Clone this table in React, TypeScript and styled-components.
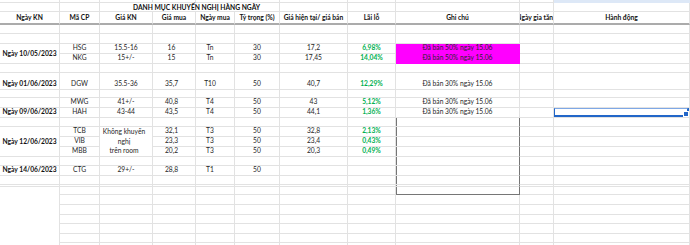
import React from 'react';
import styled, { createGlobalStyle } from 'styled-components';

const GlobalStyle = createGlobalStyle`
  html, body { margin: 0; padding: 0; background: #ffffff; }
  body { font-family: Lato, "Liberation Sans", sans-serif; }
`;

const COLS = [60, 40, 53, 43, 39, 45, 68, 48, 124, 34, 136];
const ROWS = [3, 9, 13, 9, 10, 10, 10, 9, 17, 8, 10, 10, 9, 10, 10, 10, 9, 10, 9, 2, 8, 10, 10, 9, 10, 9, 12];

const GRID = '#e2e2e2';
const BOX = '#767676';
const MAGENTA = '#ff00ff';
const GREEN = '#00b050';

type CellDef = {
  text?: string;
  bold?: boolean;
  green?: boolean;
  fill?: string;
  pr?: number;
  pl?: number;
  justify?: 'flex-start' | 'center';
  valign?: 'flex-end' | 'center';
  rs?: number;
  cs?: number;
  selected?: boolean;
  spill?: boolean;
};

const cells: Record<string, CellDef> = {};
const set = (r: number, c: number, d: CellDef) => {
  cells[`${r},${c}`] = { ...(cells[`${r},${c}`] || {}), ...d };
};

// title
set(1, 2, {
  text: 'DANH MỤC KHUYẾN NGHỊ HÀNG NGÀY',
  bold: true,
  cs: 4,
  justify: 'flex-start',
  pl: 33,
  spill: true,
});
// header
[
  'Ngày KN',
  'Mã CP',
  'Giá KN',
  'Giá mua',
  'Ngày mua',
  'Tỷ trọng (%)',
  'Giá hiện tại/ giá bán',
  'Lãi lỗ',
  'Ghi chú',
  'Ngày gia tăng',
  'Hành động',
].forEach((t, c) => set(2, c, { text: t, bold: true }));

const PR = [0, 0, 0, 5, 10, 0, 0, 0, 0, 0, 0];

const dataRow = (r: number, vals: (string | null)[]) => {
  vals.forEach((v, i) => {
    const c = i + 1;
    if (v === null) return;
    const d: CellDef = { text: v, pr: PR[c] };
    if (c === 7) {
      d.green = true;
      d.bold = true;
    }
    set(r, c, d);
  });
};

set(5, 0, { text: 'Ngày 10/05/2023', bold: true, rs: 2, valign: 'center' });
dataRow(5, ['HSG', '15.5-16', '16', 'Tn', '30', '17,2', '6,98%']);
set(5, 8, { text: 'Đã bán 50% ngày 15.06', fill: MAGENTA });
dataRow(6, ['NKG', '15+/-', '15', 'Tn', '30', '17,45', '14,04%']);
set(6, 8, { text: 'Đã bán 50% ngày 15.06', fill: MAGENTA });

set(8, 0, { text: 'Ngày 01/06/2023', bold: true });
dataRow(8, ['DGW', '35.5-36', '35,7', 'T10', '50', '40,7', '12,29%']);
set(8, 8, { text: 'Đã bán 30% ngày 15.06' });

dataRow(10, ['MWG', '41+/-', '40,8', 'T4', '50', '43', '5,12%']);
set(10, 8, { text: 'Đã bán 30% ngày 15.06' });
set(11, 0, { text: 'Ngày 09/06/2023', bold: true });
dataRow(11, ['HAH', '43-44', '43,5', 'T4', '50', '44,1', '1,36%']);
set(11, 8, { text: 'Đã bán 30% ngày 15.06' });
set(11, 10, { selected: true });

set(13, 0, { text: 'Ngày 12/06/2023', bold: true, rs: 3, valign: 'center' });
set(13, 2, { text: 'Không khuyến\nnghị\ntrên room', rs: 3, valign: 'center', pr: 4 });
dataRow(13, ['TCB', null, '32,1', 'T3', '50', '32,8', '2,13%']);
dataRow(14, ['VIB', null, '23,3', 'T3', '50', '23,4', '0,43%']);
dataRow(15, ['MBB', null, '20,2', 'T3', '50', '20,3', '0,49%']);

set(17, 0, { text: 'Ngày 14/06/2023', bold: true });
dataRow(17, ['CTG', '29+/-', '28,8', 'T1', '50']);

set(20, 0, { rs: 7 });
set(0, 10, { fill: '#dde8f7' });

const Sheet = styled.div`
  display: grid;
  grid-template-columns: ${COLS.map((w) => `${w}px`).join(' ')};
  grid-template-rows: ${ROWS.map((h) => `${h}px`).join(' ')};
  width: 690px;
  height: 245px;
  overflow: hidden;
  background: #ffffff;
  font-size: 6.7px;
  color: #222222;
`;

const Cell = styled.div<{
  $r: number;
  $c: number;
  $rs: number;
  $cs: number;
  $fill?: string;
  $bold?: boolean;
  $green?: boolean;
  $justify: string;
  $valign: string;
  $pr: number;
  $pl: number;
  $header?: boolean;
  $boxL?: boolean;
  $boxR?: boolean;
  $boxB?: boolean;
  $spill?: boolean;
}>`
  position: relative;
  grid-row: ${(p) => p.$r + 1} / span ${(p) => p.$rs};
  grid-column: ${(p) => p.$c + 1} / span ${(p) => p.$cs};
  box-sizing: border-box;
  display: flex;
  justify-content: ${(p) => p.$justify};
  align-items: ${(p) => p.$valign};
  padding: 0 ${(p) => p.$pr}px 0 ${(p) => p.$pl}px;
  background: ${(p) => p.$fill || 'transparent'};
  border-right: 1px solid ${(p) => (p.$boxR ? BOX : p.$fill || GRID)};
  border-bottom: ${(p) =>
    p.$header ? '2px solid #ababab' : `1px solid ${p.$boxB ? BOX : p.$fill || GRID}`};
  box-shadow: ${(p) => (p.$boxL ? `inset 1px 0 0 ${BOX}` : 'none')};
  overflow: ${(p) => (p.$spill ? 'visible' : 'hidden')};
  white-space: pre;
  text-align: center;
  line-height: ${(p) => (p.$spill ? '8px' : '9.6px')};
  font-weight: ${(p) => (p.$bold ? 700 : 400)};
  color: ${(p) => (p.$green ? GREEN : p.$bold ? '#111111' : '#262626')};
`;

const Selection = styled.div`
  position: absolute;
  left: -1px;
  top: -1px;
  right: 0;
  bottom: 0;
  border: 2px solid #2266c8;
  border-top-color: #7ea8e6;
  box-sizing: border-box;
  pointer-events: none;
`;

const Handle = styled.div`
  position: absolute;
  right: -2px;
  bottom: -2px;
  width: 4px;
  height: 4px;
  background: #2266c8;
  border: 1px solid #ffffff;
`;

const covered = new Set<string>();
Object.entries(cells).forEach(([k, d]) => {
  const [r, c] = k.split(',').map(Number);
  const rs = d.rs || 1;
  const cs = d.cs || 1;
  for (let i = r; i < r + rs; i++)
    for (let j = c; j < c + cs; j++) if (i !== r || j !== c) covered.add(`${i},${j}`);
});

export default function App() {
  const out: React.ReactNode[] = [];
  ROWS.forEach((_, r) => {
    COLS.forEach((__, c) => {
      const key = `${r},${c}`;
      if (covered.has(key)) return;
      const d = cells[key] || {};
      const inBox = c === 8 && r >= 12 && r <= 20;
      out.push(
        <Cell
          key={key}
          $r={r}
          $c={c}
          $rs={d.rs || 1}
          $cs={d.cs || 1}
          $fill={d.fill}
          $bold={d.bold}
          $green={d.green}
          $justify={d.justify || 'center'}
          $valign={d.valign || 'flex-end'}
          $pr={d.pr || 0}
          $pl={d.pl || 0}
          $header={r === 2}
          $boxL={inBox}
          $boxR={inBox}
          $boxB={c === 8 && r === 20}
          $spill={d.spill}
        >
          {d.text}
          {d.selected && (
            <Selection>
              <Handle />
            </Selection>
          )}
        </Cell>
      );
    });
  });
  return (
    <>
      <GlobalStyle />
      <Sheet>{out}</Sheet>
    </>
  );
}
